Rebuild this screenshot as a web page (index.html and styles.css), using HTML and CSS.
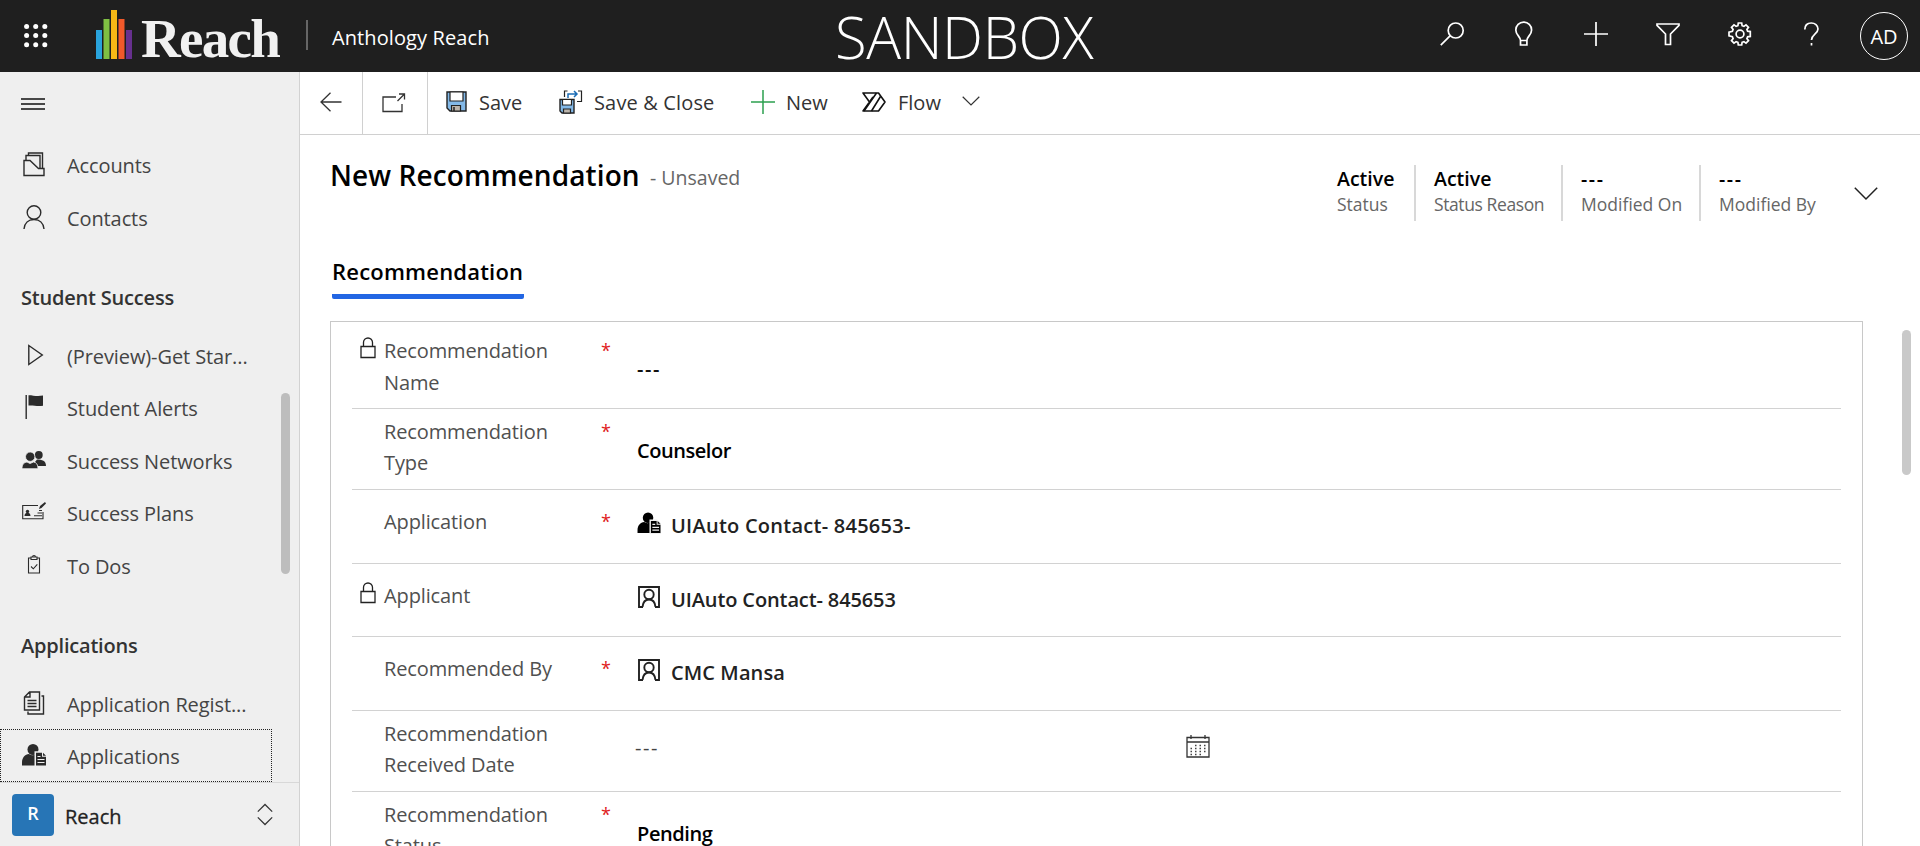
FILE: index.html
```html
<!DOCTYPE html>
<html lang="en">
<head>
<meta charset="utf-8">
<title>New Recommendation - Anthology Reach</title>
<link rel="stylesheet" href="styles.css">
</head>
<body>
<svg class="sprite" aria-hidden="true">
  <symbol id="lock" viewBox="0 0 16 22"><path d="M1 9.500h14v11H1zM3.5 9.500V5.500a4.500 4.500 0 0 1 9 0v4" fill="none" stroke="#222" stroke-width="1.300"/></symbol>
  <symbol id="applicant" viewBox="0 0 24 23"><circle cx="11" cy="6" r="5.500"/><path d="M0 22v-3c0-5 3-8 7-8.500 2 1.600 5 1.600 7 0V22z"/><path d="M12.500 7.800h8l4 4V23h-12z" class="knock"/><path d="M14 9.300h6v4h4V22H14zM21 9.300l3 3h-3z"/><path d="M15.500 13h3M15.500 16h7M15.500 19h7" class="knock-line"/></symbol>
  <symbol id="contact" viewBox="0 0 22 22"><g fill="none" stroke="#222" stroke-width="1.900"><path d="M5 21H1V1h20v20h-4"/><circle cx="11" cy="8.500" r="4.700"/><path d="M4.500 21c.5-5 3-7.500 6.500-7.500s6 2.500 6.500 7.500"/></g></symbol>
</svg>

<header class="topbar">
  <svg class="waffle" viewBox="0 0 24 24" fill="#fff"><circle cx="2.600" cy="2.600" r="2.500"/><circle cx="11.700" cy="2.600" r="2.500"/><circle cx="20.800" cy="2.600" r="2.500"/><circle cx="2.600" cy="11.600" r="2.500"/><circle cx="11.700" cy="11.600" r="2.500"/><circle cx="20.800" cy="11.600" r="2.500"/><circle cx="2.600" cy="20.700" r="2.500"/><circle cx="11.700" cy="20.700" r="2.500"/><circle cx="20.800" cy="20.700" r="2.500"/></svg>
  <svg class="logo-bars" viewBox="0 0 36 49"><path d="M0 20h6v29H0z" fill="#29a3dc"/><path d="M7.500 9h6v40h-6z" fill="#7fbf42"/><path d="M15 0h6v49h-6z" fill="#f7b816"/><path d="M22.500 9h6v40h-6z" fill="#f0592a"/><path d="M30 20h6v29h-6z" fill="#67308f"/></svg>
  <span class="logo-text">Reach</span>
  <span class="top-divider"></span>
  <span class="app-name">Anthology Reach</span>
  <span class="env">SANDBOX</span>
  <nav class="top-icons">
    <svg viewBox="0 0 24 24"><circle cx="15.700" cy="8.500" r="7.500"/><path d="M10.300 13.700L.8 23.200"/></svg>
    <svg viewBox="0 0 24 24"><path d="M8.500 18.500c0-4-4.700-5.500-4.700-10.500a7.900 7.900 0 0 1 15.800 0c0 5-4.700 6.500-4.700 10.500zM8.500 18.500v4.500h6.400v-4.500"/></svg>
    <svg viewBox="0 0 24 24"><path d="M12 0v24M0 12h24"/></svg>
    <svg viewBox="0 0 24 24"><path d="M1 2h22v1.300l-8.500 8.700v10.500h-5V12L1 3.300z"/></svg>
    <svg viewBox="0 0 24 24"><circle cx="12" cy="12" r="3.900"/><path d="M9.900 3.700 10.300 1h3.400l.4 2.700 1.800.7 2.100-1.600 2.500 2.500-1.600 2.100.7 1.800 2.700.4v4.800l-2.700.4-.7 1.800 1.600 2.100-2.500 2.500-2.100-1.600-1.800.7-.4 2.700h-3.400l-.4-2.700-1.800-.7L6 21.200l-2.500-2.500 1.600-2.100-.7-1.800-3.400-.9v-3.800l3.400-.9.7-1.800-1.600-2.100L6 2.800l2.100 1.600z"/></svg>
    <svg viewBox="0 0 24 24"><path d="M4.800 7.500C4.800 3 7.800 1 11.300 1s6.700 2.300 6.700 6c0 5-6.500 5.500-6.500 11M11.500 21v2.600"/></svg>
  </nav>
  <span class="avatar">AD</span>
</header>

<div class="body">
  <aside class="sidebar">
    <div class="burger-row"><svg class="burger" viewBox="0 0 24 12"><path d="M0 1h24M0 6h24M0 11h24" stroke="#111" stroke-width="1.300"/></svg></div>
    <a class="item"><svg class="ico" viewBox="0 0 24 24"><g class="ln"><path d="M2 8.500h6l8.500 8h5.500v7H2z"/><path d="M4 8.500v-5h14v13.500M6.500 3.500v-2.500h14v15.500"/></g></svg><span>Accounts</span></a>
    <a class="item"><svg class="ico" viewBox="0 0 24 24"><g class="ln"><circle cx="12" cy="7.500" r="6.800"/><path d="M2 24c.5-6 4.500-9.500 10-9.500s9.500 3.500 10 9.500"/></g></svg><span>Contacts</span></a>
    <h2 class="group">Student Success</h2>
    <a class="item"><svg class="ico" viewBox="0 0 24 24"><path class="ln" d="M6.800 2.500v19L20.300 12z"/></svg><span>(Preview)-Get Star...</span></a>
    <a class="item"><svg class="ico" viewBox="0 0 24 24"><path d="M3.500 0h1.400v24H3.500z"/><path d="M6.500.3c5 0 8 1.500 14.500.3v10.200c-6 .8-9.500-.6-14.500-.2z"/></svg><span>Student Alerts</span></a>
    <a class="item"><svg class="ico" viewBox="0 0 24 24"><circle cx="16.800" cy="7" r="3.900"/><path d="M13 14l2-2.500c5 .2 9 1 9 6.500h-9z"/><circle cx="8.200" cy="8.700" r="4.700" class="halo"/><path d="M0 20.700c0-4.500 2-6.200 5-6.700l3 1.500 3.500-1.500c3 .5 4.500 2.500 4.500 6.700z" class="halo"/></svg><span>Success Networks</span></a>
    <a class="item"><svg class="ico" viewBox="0 0 24 24"><path class="thin" d="M16 5.500H.7v13.300H21V12M12 15.800h8M15.500 13h4.500M17 10.500h3"/><circle cx="5.500" cy="11.500" r="1.700"/><path d="M2.500 16c0-2.500 1.300-3 3-3s3 .5 3 3z"/><path d="M17 9l1-3 5-4 1 1.500-4.500 4.500z"/></svg><span>Success Plans</span></a>
    <a class="item"><svg class="ico" viewBox="0 0 24 24"><path class="thin" d="M9 5H6.500v15h11V5H15M9 4h6v2.500H9zM10.500 4c0-2 3-2 3 0M9 13.500l2.300 2.300 4-4.500"/></svg><span>To Dos</span></a>
    <h2 class="group">Applications</h2>
    <a class="item"><svg class="ico" viewBox="0 0 24 24"><path class="ln" d="M7.500 1H17.500v18H2.500V6zM8 1v5H2.500M5.500 9.500h9M5.500 12.500h9M5.500 15.500h9M19.500 5h2v18H6v-2.500"/></svg><span>Application Regist...</span></a>
    <a class="item selected"><svg class="ico side-app"><use href="#applicant"/></svg><span>Applications</span></a>
    <span class="side-scroll"></span>
    <div class="area">
      <span class="area-badge">R</span><span class="area-name">Reach</span>
      <svg class="updown" viewBox="0 0 16 24"><path d="M.5 9 8 1.500 15.500 9M.5 15l7.500 7.500L15.500 15" fill="none" stroke="#333" stroke-width="1.300"/></svg>
    </div>
  </aside>

  <main class="main">
    <div class="commands">
      <span class="cmd-cell back"><svg viewBox="0 0 22 20" width="22" height="20"><path d="M10.500.8 1 10l9.500 9.300M1 10h20.500" fill="none" stroke="#333" stroke-width="1.300"/></svg></span>
      <span class="cmd-cell pop"><svg viewBox="0 0 24 20" width="24" height="20"><path d="M14 4H1v14.500h19V11M15.500 8 22.500 1M17 1h5.500v5.500" fill="none" stroke="#333" stroke-width="1.300"/></svg></span>
      <svg class="i-save" viewBox="0 0 21 21"><path d="M1 1h19v19H4l-3-3z" fill="#83b9e8" stroke="#222" stroke-width="1.400"/><path d="M4 1h13v9H4z" fill="#fff" stroke="#222" stroke-width="1.200"/><path d="M5.500 20v-5.500h9V20z" fill="#bbb4ab" stroke="#222" stroke-width="1.200"/><path d="M8 16v4" stroke="#222" stroke-width="1.500"/></svg>
      <span class="t-save">Save</span>
      <svg class="i-saveclose" viewBox="0 0 24 24"><path d="M1 9.500h14V23H3l-2-2z" fill="#83b9e8" stroke="#222" stroke-width="1.400"/><path d="M3.500 9.500h9v5.500h-9z" fill="#fff" stroke="#222" stroke-width="1.200"/><path d="M4.500 23v-4h7v4z" fill="#bbb4ab" stroke="#222" stroke-width="1.200"/><path d="M8.500 1H5.500v6M19 1h3.500v10.500H18" fill="none" stroke="#222" stroke-width="1.200"/><path d="M9 8V4h9M15 1l3 3-3 3" fill="none" stroke="#1b6cb5" stroke-width="1.500"/></svg>
      <span class="t-sc">Save &amp; Close</span>
      <svg class="i-new" viewBox="0 0 24 24"><path d="M12 0v24M0 12h24" stroke="#2ca04f" stroke-width="1.500"/></svg>
      <span class="t-new">New</span>
      <svg class="i-flow" viewBox="0 0 24 20"><g fill="none" stroke="#111" stroke-width="1.600" stroke-linejoin="round"><path d="M1 1h15.500l6.500 9-6.500 9H1L7.500 10z"/><path d="M2 19 14.500 1M9.500 19l9-14.500M7.500 10l3.500-5"/></g></svg>
      <span class="t-flow">Flow</span>
      <svg class="i-chev" viewBox="0 0 18 10"><path d="M.7.800 9 9 17.300.8" fill="none" stroke="#333" stroke-width="1.200"/></svg>
    </div>

    <div class="form-head">
      <h1 class="title">New Recommendation</h1><span class="unsaved">- Unsaved</span>
      <div class="stats">
        <div class="stat s1"><b>Active</b><span>Status</span></div>
        <div class="stat s2"><b>Active</b><span>Status Reason</span></div>
        <div class="stat s3"><b class="dash">---</b><span>Modified On</span></div>
        <div class="stat s4"><b class="dash">---</b><span>Modified By</span></div>
        <svg class="head-chev" viewBox="0 0 24 13"><path d="M.8.800 12 12 23.200.8" fill="none" stroke="#222" stroke-width="1.500"/></svg>
      </div>
    </div>
    <div class="tabs"><span class="tab">Recommendation</span></div>

    <div class="content">
      <section class="card">
        <div class="row first"><svg class="lock"><use href="#lock"/></svg><label>Recommendation Name</label><i>*</i><div class="val dash">---</div></div>
        <div class="row two"><label>Recommendation Type</label><i>*</i><div class="val"><span class="v-coun">Counselor</span></div></div>
        <div class="row one"><label>Application</label><i>*</i><div class="val lookup"><svg class="ent app-ent"><use href="#applicant"/></svg><span class="v-app">UIAuto Contact- 845653-</span></div></div>
        <div class="row one short"><svg class="lock"><use href="#lock"/></svg><label>Applicant</label><i></i><div class="val lookup"><svg class="ent"><use href="#contact"/></svg><span class="v-cont">UIAuto Contact- 845653</span></div></div>
        <div class="row one"><label>Recommended By</label><i>*</i><div class="val lookup"><svg class="ent"><use href="#contact"/></svg><span class="v-cmc">CMC Mansa</span></div></div>
        <div class="row two"><label>Recommendation Received Date</label><i></i><div class="val date"><span class="dash">---</span>
          <svg class="cal" viewBox="0 0 24 24"><path d="M1 3.500h22V23H1zM1 8h22M5 1v4M19 1v4" fill="none" stroke="#333" stroke-width="1.300"/><path d="M9 11.500h12M4.500 14.500H21M4.500 17.500H21M4.500 20.500h13" stroke="#444" stroke-width="1.500" stroke-dasharray="1.500 3"/></svg></div></div>
        <div class="row two"><label>Recommendation Status</label><i>*</i><div class="val"><span class="v-pend">Pending</span></div></div>
      </section>
      <span class="main-scroll"></span>
    </div>
  </main>
</div>
</body>
</html>
```
FILE: styles.css
```css
* { box-sizing: border-box; }
body {
  margin: 0;
  width: 1920px;
  height: 846px;
  overflow: hidden;
  display: flex;
  flex-direction: column;
  font-family: "Open Sans", "Noto Sans", sans-serif;
  font-size: 20px;
  color: #333;
  background: #fff;
  white-space: nowrap;
}
svg { display: block; flex: none; overflow: visible; }
.sprite { width: 0; height: 0; position: absolute; }

/* top bar */
.topbar { height: 72px; flex: none; display: flex; background: #1f1f1f; color: #fff; }
.waffle { width: 24px; height: 24px; margin: 24px 0 0 24px; }
.logo-bars { width: 36px; height: 49px; margin: 10px 0 0 48px; }
.logo-text {
  width: 140px; margin: 9px 0 0 9px;
  font: bold 55px/60px "Liberation Serif", serif;
  letter-spacing: -1.7px; color: #f1f1f1;
}
.top-divider { width: 2px; height: 30px; margin: 20px 0 0 25px; background: #666; }
.app-name { width: 160px; margin: 24px 0 0 24px; line-height: 28px; letter-spacing: .1px; }
.env { width: 264px; margin: 0 0 0 343px; font-size: 58px; font-weight: 300; line-height: 73px; letter-spacing: -.4px; }
.top-icons { display: flex; gap: 48px; margin: 22px 0 0 341px; }
.top-icons svg { width: 24px; height: 24px; fill: none; stroke: #fff; stroke-width: 1.7; }
.avatar {
  width: 48px; height: 48px; margin: 12px 0 0 36px;
  border: 1.5px solid #fff; border-radius: 50%;
  text-align: center; line-height: 48px; font-size: 20px;
}

/* sidebar */
.body { flex: 1; min-height: 0; display: flex; }
.sidebar { position: relative; width: 300px; flex: none; display: flex; flex-direction: column; background: #efefef; border-right: 1px solid #d2d2d2; }
.burger-row { height: 66px; flex: none; padding: 26px 0 0 21px; }
.burger { width: 24px; height: 12px; }
.item { height: 52.5px; flex: none; width: 272px; display: flex; align-items: flex-start; gap: 21px; padding: 13px 0 0 22px; line-height: 30px; color: #444; }
.ico { width: 24px; height: 24px; margin-top: 1px; fill: #2b2b2b; }
.ico .ln { fill: none; stroke: #2b2b2b; stroke-width: 1.4; }
.ico .thin { fill: none; stroke: #2b2b2b; stroke-width: 1.1; }
.item .halo { stroke: #efefef; stroke-width: .8; }
.item span { letter-spacing: -.1px; }
.group { height: 85.5px; flex: none; margin: 0; padding: 40px 0 0 21px; font-size: 20px; line-height: 30px; font-weight: 600; letter-spacing: -.2px; color: #333; }
.selected { outline: 1px dotted #222; outline-offset: -1px; }
.knock { fill: #efefef; }
.knock-line { stroke: #efefef; stroke-width: 1.2; }
.side-scroll { position: absolute; left: 281px; top: 321px; width: 9px; height: 181px; border-radius: 5px; background: #bdbdbd; }
.area { margin-top: auto; height: 64px; flex: none; display: flex; border-top: 1px solid #d8d8d8; color: #222; }
.area-badge { width: 42px; height: 42px; margin: 11px 0 0 12px; background: #2775b6; border-radius: 4px; color: #fff; font-weight: 600; font-size: 18px; line-height: 38px; text-align: center; }
.area-name { width: 60px; margin: 19px 0 0 11px; line-height: 30px; -webkit-text-stroke: .3px #222; }
.updown { width: 16px; height: 23px; margin: 20px 0 0 132px; }

/* command bar */
.main { flex: 1; min-width: 0; display: flex; flex-direction: column; }
.commands { height: 63px; flex: none; display: flex; border-bottom: 1px solid #d0d0d0; line-height: 30px; }
.commands > span:not(.cmd-cell) { margin-top: 16px; }
.cmd-cell { border-right: 1px solid #d0d0d0; }
.back { width: 63px; padding: 20px 0 0 20px; }
.pop { width: 65px; padding: 21px 0 0 19px; }
.i-save { width: 21px; height: 21px; margin: 19px 12px 0 18px; }
.i-saveclose { width: 24px; height: 24px; margin: 18px 11px 0 36px; }
.i-new { width: 24px; height: 24px; margin: 18px 11px 0 35px; }
.i-flow { width: 24px; height: 20px; margin: 20px 12px 0 34px; }
.i-chev { width: 18px; height: 10px; margin: 24px 0 0 21px; }
.t-save { width: 44px; }
.t-sc { width: 122px; letter-spacing: .15px; }
.t-new { width: 42px; }
.t-flow { width: 43px; }

/* record header */
.form-head { height: 107px; flex: none; display: flex; padding-left: 30px; }
.title { width: 309px; margin: 20px 0 0; font-size: 28px; line-height: 40px; font-weight: 600; letter-spacing: .1px; color: #000; }
.unsaved { margin: 28px 0 0 11px; font-size: 19.5px; line-height: 30px; color: #666; }
.stats { display: flex; margin: 30px 42px 0 auto; }
.stat { height: 56px; padding: 3px 0 0 18px; border-left: 2px solid #d8d8d8; }
.stat b { display: block; height: 22px; line-height: 22px; font-size: 19.5px; font-weight: 600; color: #000; }
.stat span { display: block; padding-top: 2px; line-height: 24px; font-size: 17.5px; color: #666; }
.s1 { width: 97px; border-color: transparent; }
.s2 { width: 147px; }
.s2 span { letter-spacing: -.4px; }
.s3 { width: 138px; }
.s4 { width: 155px; }
.dash { letter-spacing: 1.6px; }
.head-chev { width: 24px; height: 13px; margin-top: 22px; }
.tabs { height: 79px; flex: none; padding: 16px 0 0 32px; }
.tab { display: block; width: 192px; height: 41px; line-height: 26px; font-weight: 600; font-size: 22px; letter-spacing: .2px; color: #000; border-bottom: 5px solid #2266e3; border-radius: 0 0 2px 2px; }

/* form */
.content { flex: 1; min-height: 0; overflow: hidden; display: flex; padding-left: 30px; }
.card { width: 1533px; height: 560px; border: 1px solid #c8c8c8; padding: 0 21px; }
.row { position: relative; display: grid; grid-template-columns: 217px 36px 1fr; padding-left: 32px; border-bottom: 1px solid #d2d2d2; line-height: 31.5px; color: #505050; }
.row label { width: 190px; white-space: normal; letter-spacing: -.12px; }
.row i { font-style: normal; font-size: 18px; color: #e02020; }
.val { color: #111; font-weight: 600; }
.lock { position: absolute; left: 8px; top: 15px; width: 16px; height: 22px; }
.one .lock { top: 18px; }
.first { height: 87px; padding-top: 13px; }
.first .val { padding-top: 18px; }
.two { height: 81px; padding-top: 6.5px; }
.two .val { padding-top: 19.5px; color: #000; }
.one { height: 74px; padding-top: 16px; }
.short { height: 73px; }
.val.lookup { display: flex; gap: 12px; padding-top: 4px; color: #222; }
.ent { width: 22px; height: 22px; margin: 2px 0 0 1px; }
.lookup .ent + span { margin-left: -1px; }
.app-ent { width: 24px; fill: #000; margin: 2px -1px 0 0; }
.val .knock { fill: #fff; }
.val .knock-line { stroke: #fff; }
.v-coun { letter-spacing: -.45px; }
.v-app { letter-spacing: .25px; }
.v-cont { letter-spacing: -.12px; }
.v-cmc { letter-spacing: .1px; }
.v-pend { letter-spacing: -.4px; }
.two .date { display: flex; padding-top: 14px; margin-left: -2px; font-weight: 400; color: #444; }
.date span { width: 551px; }
.cal { width: 24px; height: 24px; margin-top: 2px; }
.main-scroll { width: 9px; height: 145px; margin: 9px 0 0 39px; border-radius: 5px; background: #c9c9c9; }
```
